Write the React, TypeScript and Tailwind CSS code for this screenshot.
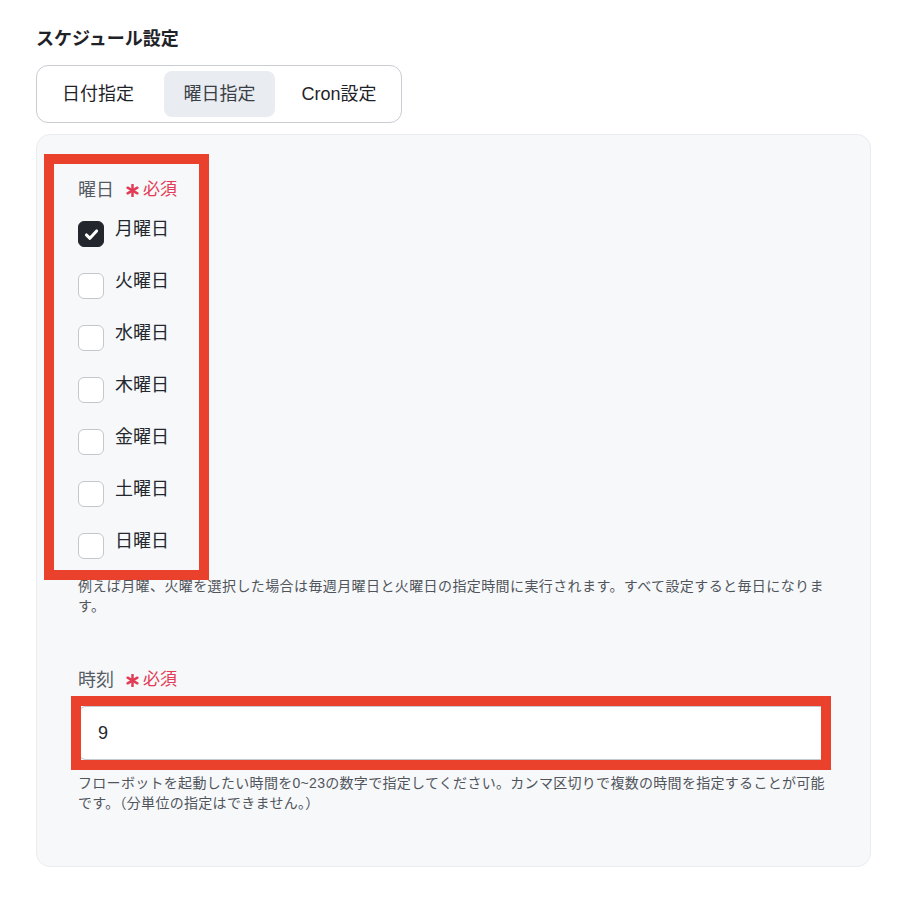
import { useState } from "react";

const days = ["月曜日", "火曜日", "水曜日", "木曜日", "金曜日", "土曜日", "日曜日"];

function Required() {
  return (
    <span className="ml-[12px] inline-flex items-center gap-[4px] text-[17px] text-[#e23b55]">
      <svg width="13" height="13" viewBox="0 0 12 12" className="mt-[1px]">
        <g stroke="#e23b55" strokeWidth="2.3" strokeLinecap="round">
          <line x1="6" y1="0.8" x2="6" y2="11.2" />
          <line x1="1.5" y1="3.4" x2="10.5" y2="8.6" />
          <line x1="1.5" y1="8.6" x2="10.5" y2="3.4" />
        </g>
      </svg>
      必須
    </span>
  );
}

export default function App() {
  const [tab, setTab] = useState(1);
  const [checked, setChecked] = useState<boolean[]>([true, false, false, false, false, false, false]);
  const [hour, setHour] = useState("9");

  const toggle = (i: number) =>
    setChecked((prev) => prev.map((v, j) => (j === i ? !v : v)));

  const tabs = [
    { label: "日付指定", cls: "w-[114px]" },
    { label: "曜日指定", cls: "ml-[9px] w-[111px]" },
    { label: "Cron設定", cls: "ml-[6px] w-[116px]" },
  ];

  return (
    <div className="min-h-screen bg-white pl-[36px] pt-[27px] font-['Liberation_Sans','Noto_Sans_CJK_JP',sans-serif] text-[#1f2328]">
      <h2 className="text-[18px] font-bold leading-[24px]">スケジュール設定</h2>

      {/* Tabs */}
      <div className="mt-[14px] inline-flex rounded-[12px] border border-[#c9ccd2] bg-white px-[4px] py-[5px]">
        {tabs.map((t, i) => (
          <button
            key={t.label}
            onClick={() => setTab(i)}
            className={`${t.cls} h-[46px] rounded-[8px] text-[18px] ${
              tab === i ? "bg-[#e9ecf0] text-[#3a3f47]" : "text-[#1f2328]"
            }`}
          >
            {t.label}
          </button>
        ))}
      </div>

      {/* Panel */}
      <div className="relative mt-[11px] w-[835px] rounded-[14px] border border-[#eaecef] bg-[#f7f8fa] px-[41px] pb-[53px] pt-[43px]">
        <div className="flex items-center text-[18px] leading-[24px] text-[#555b63]">
          曜日
          <Required />
        </div>

        <div className="mt-[15px] flex flex-col gap-[22px]">
          {days.map((d, i) => (
            <label key={d} className="flex cursor-pointer items-start gap-[11px]">
              <span
                onClick={() => toggle(i)}
                className={`mt-[4px] flex h-[26px] w-[26px] items-center justify-center rounded-[6px] border ${
                  checked[i] ? "border-[#23262d] bg-[#23262d]" : "border-[#c3c7ce] bg-white"
                }`}
              >
                {checked[i] && (
                  <svg width="17" height="17" viewBox="0 0 16 16">
                    <path d="M3.2 8.4 L6.5 11.6 L12.8 4.6" fill="none" stroke="white" strokeWidth="2.8" strokeLinecap="round" strokeLinejoin="round" />
                  </svg>
                )}
              </span>
              <span className="text-[18px] leading-[24px] text-[#24282e]">{d}</span>
            </label>
          ))}
        </div>

        <p className="mt-[17px] text-[14px] leading-[20px] tracking-[0.4px] text-[#50555c]">
          <span className="block whitespace-nowrap">
            例えば月曜、火曜を選択した場合は毎週月曜日と火曜日の指定時間に実行されます。すべて設定すると毎日になりま
          </span>
          <span className="block">す。</span>
        </p>

        <div className="mt-[52px] flex items-center text-[18px] leading-[24px] text-[#555b63]">
          時刻
          <Required />
        </div>

        <input
          value={hour}
          onChange={(e) => setHour(e.target.value)}
          className="mt-[14px] block h-[54px] w-full rounded-[8px] border border-[#c3c7ce] bg-white pl-[19px] text-[18px] text-[#24282e] outline-none"
        />

        <p className="mt-[13px] text-[14px] leading-[20px] tracking-[0.3px] text-[#50555c]">
          <span className="block whitespace-nowrap">
            フローボットを起動したい時間を0~23の数字で指定してください。カンマ区切りで複数の時間を指定することが可能
          </span>
          <span className="block">です。（分単位の指定はできません。）</span>
        </p>

        {/* annotation boxes */}
        <div className="pointer-events-none absolute left-[7px] top-[19px] h-[426px] w-[165px] border-[10px] border-[#e9412b]" />
        <div className="pointer-events-none absolute left-[34px] top-[561px] h-[74px] w-[760px] border-[10px] border-[#e9412b]" />
      </div>
    </div>
  );
}
